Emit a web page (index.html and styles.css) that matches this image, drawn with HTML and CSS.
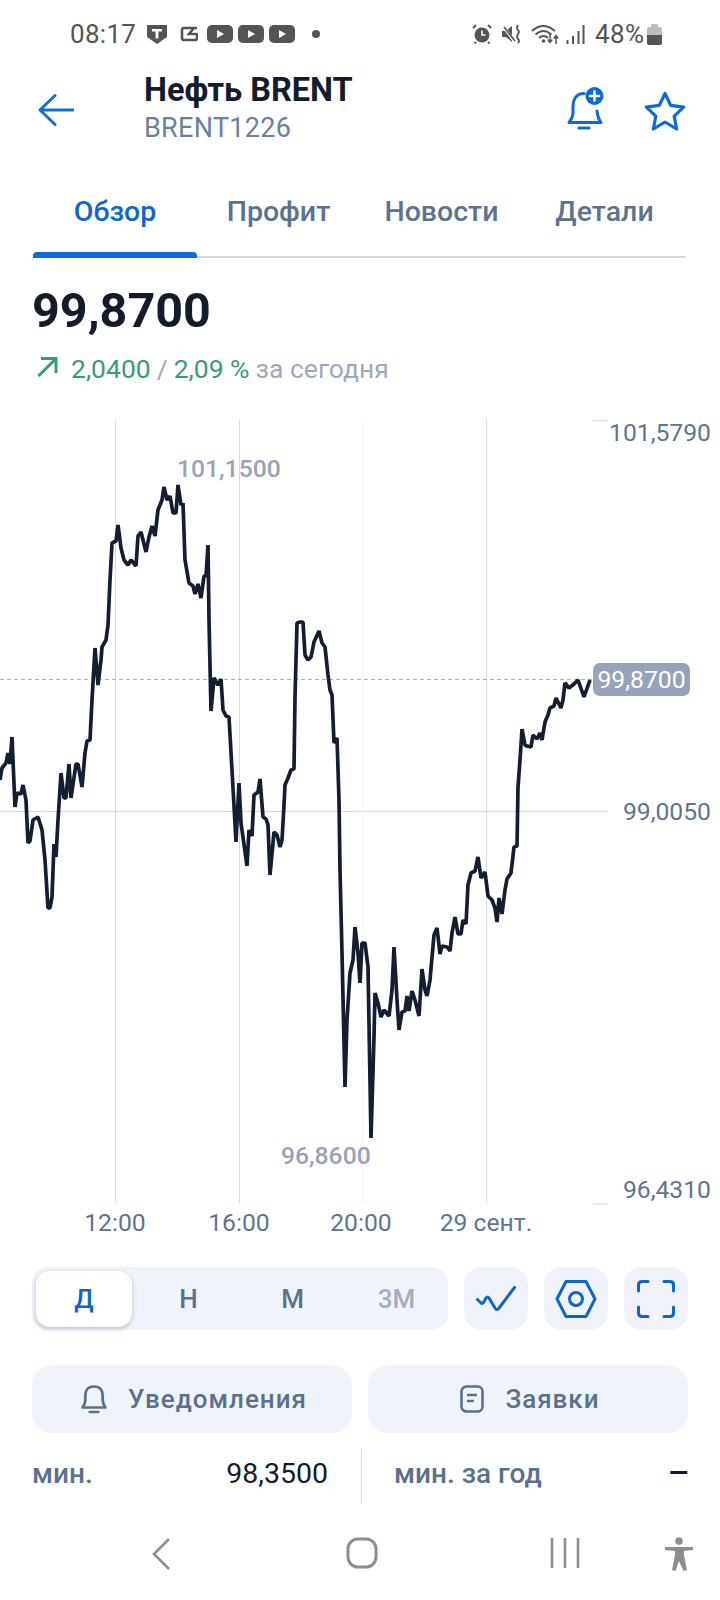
FILE: index.html
```html
<!DOCTYPE html>
<html lang="ru">
<head>
	<meta charset="utf-8">
	<meta name="viewport" content="width=device-width, initial-scale=1">
	<title>Нефть BRENT</title>
	<link rel="stylesheet" href="styles.css">
</head>
<body>
	<div class="status-bar">
		<span class="status-time">08:17</span>
		<svg class="st-shield" width="20" height="20" viewBox="0 0 20 20"><path d="M0 1h20v12l-10 7-10-7z" fill="#555"/><path d="M5 5h10v2.600h-3.600v7h-2.800v-7h-3.600z" fill="#fff"/></svg>
		<svg class="st-c" width="18" height="16" viewBox="0 0 18 16"><path d="M17 2H4Q2 2 2 4v8q0 2 2 2h11q2 0 2-2V9q0-1-1-1H9l5-6" fill="none" stroke="#555" stroke-width="2.600"/></svg>
		<svg class="st-yt" width="26" height="18" viewBox="0 0 26 18"><rect width="26" height="18" rx="5" fill="#555"/><path d="M10 5l7 4-7 4z" fill="#fff"/></svg>
		<svg class="st-yt" width="26" height="18" viewBox="0 0 26 18"><rect width="26" height="18" rx="5" fill="#555"/><path d="M10 5l7 4-7 4z" fill="#fff"/></svg>
		<svg class="st-yt" width="26" height="18" viewBox="0 0 26 18"><rect width="26" height="18" rx="5" fill="#555"/><path d="M10 5l7 4-7 4z" fill="#fff"/></svg>
		<span class="st-dot"></span>
		<span class="status-gap"></span>
		<svg width="20" height="20" viewBox="0 0 20 20"><circle cx="10" cy="11" r="7.500" fill="#555"/><path d="M10 6.500V11h3.500" fill="none" stroke="#fff" stroke-width="1.600"/><path d="M1 4l3-3M19 4l-3-3M4 18l-1.500 1.500M16 18l1.500 1.500" stroke="#555" stroke-width="2"/></svg>
		<svg class="st-mute" width="20" height="20" viewBox="0 0 20 20"><path d="M0 7h4l6-5v16l-6-5H0z" fill="#555"/><path d="M1 2l12 16" stroke="#fff" stroke-width="3"/><path d="M2 3l11 14" stroke="#555" stroke-width="1.600"/><path d="M16 1q-2 3 0 5t0 4q-2 3 0 5t0 4" fill="none" stroke="#555" stroke-width="1.800"/></svg>
		<svg class="st-wifi" width="29" height="22" viewBox="0 0 29 22"><path d="M1 8q11-10 23 0M4.500 11.500q8-7 16 0M8 15q4.500-4 9 0" fill="none" stroke="#555" stroke-width="2"/><circle cx="12.500" cy="18" r="1.800" fill="#555"/><path d="M19 11v8M16.800 16.500l2.200 3 2.200-3M25 21v-8M22.800 15.500l2.200-3 2.200 3" fill="none" stroke="#555" stroke-width="1.500"/></svg>
		<svg class="st-signal" width="19" height="20" viewBox="0 0 19 20"><path d="M1.500 20v-4M7 20v-8M12.500 20v-13M17.500 20V1" stroke="#555" stroke-width="2"/></svg>
		<span class="status-pct">48%</span>
		<svg class="st-batt" width="15" height="21" viewBox="0 0 15 21"><path d="M4 1.500Q4 0 5.500 0h4Q11 0 11 1.500V3h2q2 0 2 2v6H0V5q0-2 2-2h2z" fill="#bdbdbd"/><path d="M0 11h15v8q0 2-2 2H2q-2 0-2-2z" fill="#555"/></svg>
	</div>

	<header class="top">
		<svg class="back" width="36" height="32" viewBox="0 0 36 32"><path d="M35 16H3M17 1.500 2 16l15 14.500" fill="none" stroke="#1070d8" stroke-width="3" stroke-linecap="round" stroke-linejoin="round"/></svg>
		<div class="top-title">
			<div class="name">Нефть BRENT</div>
			<div class="ticker">BRENT1226</div>
		</div>
		<svg class="bell-plus" width="38" height="44" viewBox="0 0 38 44"><path d="M18 6.500C9 6.500 7 14 7 20v6q0 4-4 9.500h32Q32 32 31 24" fill="none" stroke="#0b6ad8" stroke-width="3" stroke-linecap="round" stroke-linejoin="round"/><path d="M13 41h10" stroke="#0b6ad8" stroke-width="3" stroke-linecap="round"/><circle cx="28.500" cy="9" r="9" fill="#0b6ad8"/><path d="M28.500 4.500v9M24 9h9" stroke="#fff" stroke-width="2.600" stroke-linecap="round"/></svg>
		<svg class="star" width="42" height="40" viewBox="0 0 42 40"><path d="M21 2.500l5.700 11.900 13 1.700-9.500 9 2.400 12.900L21 31l-11.600 7 2.400-12.900-9.500-9 13-1.700z" fill="none" stroke="#0b6ad8" stroke-width="3.200" stroke-linejoin="round"/></svg>
	</header>

	<nav class="tabs">
		<a class="tab tab-active">Обзор</a>
		<a class="tab">Профит</a>
		<a class="tab">Новости</a>
		<a class="tab">Детали</a>
	</nav>

	<section class="quote">
		<div class="price">99,8700</div>
		<div class="change">
			<svg width="24" height="24" viewBox="0 0 24 24"><path d="M3.500 21 21 3.500M6 3.500h15V18" fill="none" stroke="#3a9a7a" stroke-width="3"/></svg>
			<span class="up">2,0400</span>
			<span class="sep">/</span>
			<span class="up">2,09 %</span>
			<span class="today">за сегодня</span>
		</div>
	</section>

	<section class="chart">
		<svg class="chart-svg" width="720" height="830" viewBox="0 420 720 830">
			<path class="grid" d="M115.500 420V1203M239.500 420V1203M486.500 420V1203M0 811.500H608M593 420.500H608M593 1204H608"/>
			<path class="grid-faint" d="M362.500 420V1203"/>
			<path class="last-line" d="M0 679.500H593"/>
			<polyline class="line" points="0,780 2,768 6,763 8,753 10,764 12,737 15,807 17,793 21,794 23,785 26,800 28,843 30,841 33,820 38,817 42,830 45,860 48,908 50,908 52,897 54,844 56,857 58,820 61,773 64,798 66,798 69,764 71,798 76,764 78,764 82,787 85,753 87,741 90,740 92,700 95,648 98,685 101,660 102,647 106,640 108,625 110,580 112,543 116,541 118,525 121,548 124,560 128,565 131,560 136,566 138,536 141,532 146,552 149,537 152,526 155,536 158,510 162,500 164,487 167,500 170,496 173,513 176,513 178,485 181,505 183,503 185,560 189,583 193,586 195,594 198,584 201,598 204,576 206,576 208,545 209,620 211,711 214,678 218,685 221,679 223,710 226,716 229,717 232,770 236,842 239,783 241,823 247,866 249,830 252,836 254,795 258,792 260,779 263,817 266,819 268,825 270,875 274,832 277,835 280,847 282,840 284,805 285,785 288,778 291,770 294,769 295,697 297,623 300,622 303,622 305,655 308,660 311,657 314,642 319,631 322,643 325,647 328,675 330,690 332,695 334,743 337,738 339,800 340,870 342,953 345,1087 347,1020 350,973 353,960 355,927 358,953 360,983 362,943 365,943 368,967 371,1138 374,1037 375,993 378,1003 381,1017 384,1010 389,1016 392,990 394,947 397,1000 399,1030 402,1012 405,1011 407,996 409,1011 412,991 415,1000 419,1016 422,969 425,990 427,996 430,980 434,935 437,928 440,954 442,946 447,947 450,951 452,933 455,917 458,934 461,934 463,920 466,924 468,885 471,873 475,871 478,857 481,878 485,872 488,896 492,900 495,908 497,922 499,898 502,914 505,890 507,879 511,873 514,847 517,846 518,787 520,760 522,729 525,745 527,746 531,747 533,735 537,739 540,733 542,740 545,722 548,715 550,708 554,706 556,698 561,708 563,700 565,683 569,688 574,684 578,680 584,697 590,680"/>
		</svg>
		<span class="axis axis-top">101,5790</span>
		<span class="axis axis-mid">99,0050</span>
		<span class="axis axis-low">96,4310</span>
		<span class="last-badge">99,8700</span>
		<span class="extreme extreme-max">101,1500</span>
		<span class="extreme extreme-min">96,8600</span>
		<span class="time time-12">12:00</span>
		<span class="time time-16">16:00</span>
		<span class="time time-20">20:00</span>
		<span class="time time-29">29 сент.</span>
	</section>

	<div class="controls">
		<div class="segments">
			<button class="seg seg-active">Д</button>
			<button class="seg">Н</button>
			<button class="seg">М</button>
			<button class="seg seg-off">3М</button>
		</div>
		<button class="tool">
			<svg width="40" height="26" viewBox="0 0 40 26"><path d="M1.500 13.500 5 17q1 1 2.500-.5L10 12q1.500-2 3 0l6 10q2 3 4 0L38.500 1.500" fill="none" stroke="#0f66c8" stroke-width="3" stroke-linecap="round" stroke-linejoin="round"/></svg>
		</button>
		<button class="tool">
			<svg width="42" height="38" viewBox="0 0 42 38"><path d="M11 1.500h20L40 19l-9 17.500H11L2 19z" fill="none" stroke="#0f66c8" stroke-width="3" stroke-linejoin="round"/><circle cx="21" cy="19" r="6.500" fill="none" stroke="#0f66c8" stroke-width="3"/></svg>
		</button>
		<button class="tool">
			<svg width="38" height="38" viewBox="0 0 38 38"><path d="M11 1.500H5Q1.500 1.500 1.500 5v6M27 1.500h6q3.500 0 3.500 3.500v6M11 36.500H5q-3.500 0-3.500-3.500v-6M27 36.500h6q3.500 0 3.500-3.500v-6" fill="none" stroke="#0f66c8" stroke-width="3" stroke-linecap="round"/></svg>
		</button>
	</div>

	<div class="actions">
		<button class="action">
			<svg width="26" height="29" viewBox="0 0 24 29" preserveAspectRatio="none"><path d="M12 1.500C6 1.500 4 6 4 10v5q0 4-2.500 7.500h21Q20 19 20 15v-5c0-4-2-8.500-8-8.500z" fill="none" stroke="#5b708e" stroke-width="2.600" stroke-linejoin="round"/><path d="M8 27h8" stroke="#5b708e" stroke-width="2.600" stroke-linecap="round"/></svg>
			<span>Уведомления</span>
		</button>
		<button class="action">
			<svg width="24" height="28" viewBox="0 0 24 28"><rect x="1.500" y="1.500" width="21" height="25" rx="5" fill="none" stroke="#5b708e" stroke-width="2.600"/><path d="M7 10h10M7 16h7" stroke="#5b708e" stroke-width="2.600"/></svg>
			<span>Заявки</span>
		</button>
	</div>

	<div class="stats">
		<div class="stat stat-left"><span class="stat-label">мин.</span><span class="stat-value">98,3500</span></div>
		<div class="stat stat-right"><span class="stat-label">мин. за год</span><span class="stat-value stat-dash">—</span></div>
	</div>

	<div class="nav-bar">
		<svg class="nav-back" width="20" height="34" viewBox="0 0 20 34"><path d="M18 2 3 17l15 15" fill="none" stroke="#8e8e8e" stroke-width="2.600"/></svg>
		<svg class="nav-home" width="32" height="32" viewBox="0 0 32 32"><rect x="2" y="2" width="28" height="28" rx="10" fill="none" stroke="#8e8e8e" stroke-width="3"/></svg>
		<svg class="nav-recent" width="32" height="32" viewBox="0 0 32 32"><path d="M3 1v30M16 1v30M29 1v30" stroke="#8e8e8e" stroke-width="2.600"/></svg>
		<svg class="nav-person" width="30" height="34" viewBox="0 0 30 34"><circle cx="15" cy="4" r="3.800" fill="#8e8e8e"/><path d="M1 10h28v3l-9 1v4l3 15-3.500 1L15 24l-3.500 10L8 33l3-15v-4l-10-1z" fill="#8e8e8e"/></svg>
	</div>
</body>
</html>
```

FILE: styles.css
```css
html { font-family: Roboto, "Noto Sans", sans-serif; }
body {
	margin: 0;
	width: 720px;
	height: 1600px;
	overflow: hidden;
	background: #fff;
	color: #141b2b;
}
button {
	font-family: inherit;
	border: 0;
	padding: 0;
}

/* status bar */
.status-bar {
	height: 68px;
	padding-left: 70px;
	display: flex;
	align-items: center;
	color: #555;
}
.status-time { font-size: 26px; width: 77px; letter-spacing: 0.3px; }
.st-shield { margin-right: 13px; }
.st-c { margin-right: 9px; }
.st-yt { margin-right: 5px; }
.st-dot { width: 8px; height: 8px; border-radius: 50%; background: #555; margin-left: 12px; }
.status-gap { width: 152px; }
.st-mute { margin-left: 10px; }
.st-wifi { margin-left: 9px; }
.st-signal { margin-left: 6px; }
.status-pct { font-size: 26px; margin-left: 10px; letter-spacing: 0.4px; }
.st-batt { margin-left: 3px; }

/* header */
.top {
	height: 84px;
	padding-left: 38px;
	display: flex;
	align-items: center;
}
.back { margin-right: 70px; }
.top-title { width: 422px; }
.name { font-size: 32.500px; font-weight: 700; line-height: 36px; }
.ticker { font-size: 27px; line-height: 40px; color: #6b809c; letter-spacing: 0.3px; }
.bell-plus { margin-right: 40px; margin-top: -2px; }
.star { margin-top: 2px; }

/* tabs */
.tabs {
	margin: 26px 34px 0 33px;
	height: 80px;
	display: flex;
	box-sizing: border-box;
	border-bottom: 2px solid #d5d8e3;
}
.tab {
	font-size: 28.500px;
	font-weight: 500;
	color: #5d7290;
	line-height: 68px;
	width: 163px;
	text-align: center;
	position: relative;
	box-sizing: border-box;
}
.tab-active { color: #0f66c8; width: 164px; }
.tab-active::after {
	content: "";
	position: absolute;
	left: 0;
	right: 0;
	bottom: -2px;
	height: 6px;
	background: #0b6ce2;
	border-radius: 4px 4px 0 0;
}

/* price */
.quote { padding: 24px 33px 0; height: 162px; box-sizing: border-box; }
.price { font-size: 48.500px; font-weight: 700; line-height: 58px; margin-left: -1px; }
.change {
	margin-top: 12px;
	height: 32px;
	display: flex;
	align-items: center;
	gap: 6px;
	font-size: 26.500px;
	margin-left: 2px;
}
.change svg { margin-right: 6px; margin-top: -3px; }
.up { color: #3a9a7a; }
.sep { color: #a0a8bd; }
.today { color: #a0a8bd; }

/* chart */
.chart { position: relative; height: 842px; margin-top: 0; }
.chart-svg { display: block; position: absolute; left: 0; top: 0; }
.grid { stroke: #d8dae0; stroke-width: 1; fill: none; }
.grid-faint { stroke: #f2f3f5; stroke-width: 1; fill: none; }
.last-line { stroke: #aeb1b8; stroke-width: 1; stroke-dasharray: 4 3; fill: none; }
.line { fill: none; stroke: #141e30; stroke-width: 3.700; stroke-linejoin: bevel; }

.axis, .time, .extreme, .last-badge { position: absolute; font-size: 24.700px; line-height: 30px; white-space: nowrap; }
.axis { right: 9px; color: #5f7490; }
.axis-top { top: -2px; }
.axis-mid { top: 377px; }
.axis-low { top: 755px; }
.last-badge {
	left: 593px;
	top: 243px;
	width: 97px;
	height: 33px;
	line-height: 33px;
	text-align: center;
	color: #fff;
	background: #97a3bd;
	border-radius: 7px;
}
.extreme { color: #98a3b8; font-weight: 500; }
.extreme-max { left: 177px; top: 34px; }
.extreme-min { left: 281px; top: 721px; }
.time { color: #5f7490; top: 788px; width: 120px; text-align: center; }
.time-12 { left: 55px; }
.time-16 { left: 179px; }
.time-20 { left: 301px; }
.time-29 { left: 426px; }

/* range + tools */
.controls {
	padding-left: 32px;
	height: 63px;
	margin-top: 5px;
	display: flex;
	gap: 16px;
}
.segments {
	width: 416px;
	margin-right: 0;
	background: #f0f4fa;
	border-radius: 16px;
	display: flex;
	padding: 4px 0 3px 4px;
	box-sizing: border-box;
}
.seg {
	width: 105px;
	margin-right: -1px;
	background: none;
	font-size: 26px;
	font-weight: 500;
	color: #5b708e;
	border-radius: 14px;
}
.seg-active { width: 96px; margin-right: 4px; background: #fff; color: #0f66c8; box-shadow: 0 2px 5px rgba(60, 70, 90, 0.3); }
.seg-off { color: #a4aec2; }
.tool {
	width: 64px;
	height: 63px;
	background: #f0f4fa;
	border-radius: 18px;
	display: flex;
	align-items: center;
	justify-content: center;
}

/* buttons */
.actions {
	padding: 0 32px;
	margin-top: 35px;
	display: flex;
	gap: 16px;
}
.action {
	flex: 1;
	height: 68px;
	padding-left: 4px;
	background: #f0f4fa;
	border-radius: 20px;
	display: flex;
	align-items: center;
	justify-content: center;
	gap: 21px;
	font-size: 26px;
	font-weight: 500;
	letter-spacing: 1px;
	color: #5b708e;
}

/* stats */
.stats {
	margin-top: 16px;
	height: 55px;
	display: flex;
}
.stat {
	display: flex;
	align-items: center;
	justify-content: space-between;
	font-size: 28.500px;
	box-sizing: border-box;
}
.stat span { margin-top: -6px; }
.stat-left { width: 362px; padding: 0 33px 0 32px; border-right: 1px solid #d8dae0; }
.stat-right { width: 358px; padding: 0 32px; }
.stat-label { color: #5b708e; font-weight: 500; font-size: 28px; }
.stat-value { color: #141b2b; }
.stat-dash { font-size: 25px; font-weight: 700; }

/* android nav */
.nav-bar {
	position: relative;
	height: 97px;
}
.nav-bar svg { position: absolute; top: 33px; }
.nav-back { left: 151px; }
.nav-home { left: 346px; }
.nav-recent { left: 549px; }
.nav-person { left: 664px; }
```
